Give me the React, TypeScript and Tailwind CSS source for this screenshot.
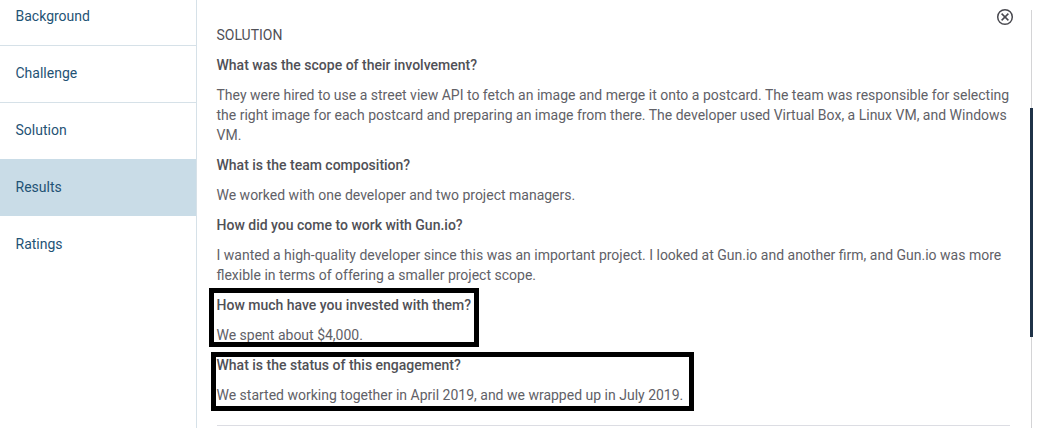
const nav = ["Background", "Challenge", "Solution", "Results", "Ratings"];

function Q({ children }: { children: React.ReactNode }) {
  return <p className="mb-[10px] font-medium text-[#505056]">{children}</p>;
}
function A({ children }: { children: React.ReactNode }) {
  return <p className="mb-[10px] text-[#616167]">{children}</p>;
}

export default function App() {
  return (
    <div
      className="relative flex h-[428px] w-[1045px] overflow-hidden bg-white text-[14px] leading-[20px]"
      style={{ fontFamily: '"Roboto", sans-serif' }}
    >
      <aside className="-mt-[11px] w-[197px] shrink-0 border-r border-[#d6e1e8]">
        {nav.map((n, i) => (
          <div
            key={n}
            className={`flex items-center pl-[15.5px] text-[#1f5375] ${
              n === "Solution" ? "h-[56px]" : "h-[57px]"
            } ${n === "Results" ? "bg-[#c9dce7]" : ""} ${
              i < 2 ? "border-b border-[#d6e1e8] pb-[2px]" : n === "Solution" ? "pb-[2px]" : "pb-[1px]"
            }`}
          >
            {n}
          </div>
        ))}
      </aside>

      <main className="relative flex-1 pl-[19.5px] pt-[25px]">
        <div className="w-[793px]">
          <p className="mb-[10px] text-[#505056]">SOLUTION</p>
          <Q>What was the scope of their involvement?</Q>
          <A>
            They were hired to use a street view API to fetch an image and merge it onto a postcard. The team was
            responsible for selecting the right image for each postcard and preparing an image from there. The
            developer used Virtual Box, a Linux VM, and Windows VM.
          </A>
          <Q>What is the team composition?</Q>
          <A>We worked with one developer and two project managers.</A>
          <Q>How did you come to work with Gun.io?</Q>
          <A>
            I wanted a high-quality developer since this was an important project. I looked at Gun.io and another firm,
            and Gun.io was more flexible in terms of offering a smaller project scope.
          </A>
          <Q>How much have you invested with them?</Q>
          <A>We spent about $4,000.</A>
          <Q>What is the status of this engagement?</Q>
          <A>We started working together in April 2019, and we wrapped up in July 2019.</A>
          <div className="mt-[20px] border-t border-[#dcdde3]" />
        </div>

        <svg
          className="absolute left-[799px] top-[8px]"
          width="18"
          height="18"
          viewBox="0 0 18 18"
          fill="none"
          stroke="#4a4a50"
          strokeWidth="1.5"
        >
          <circle cx="9" cy="9" r="7.3" />
          <path d="M5.6 5.6l6.8 6.8M12.4 5.6l-6.8 6.8" />
        </svg>
      </main>

      <div className="absolute left-[1031px] top-[10px] bottom-0 w-px bg-[#d4d4d6]" />
      <div className="absolute left-[1030px] top-[108px] h-[229px] w-[3px] bg-[#1f3247]" />

      <div className="absolute left-[209px] top-[288px] h-[59px] w-[270px] border-[5px] border-black" />
      <div className="absolute left-[211px] top-[352px] h-[59px] w-[483px] border-[5px] border-black" />
    </div>
  );
}
